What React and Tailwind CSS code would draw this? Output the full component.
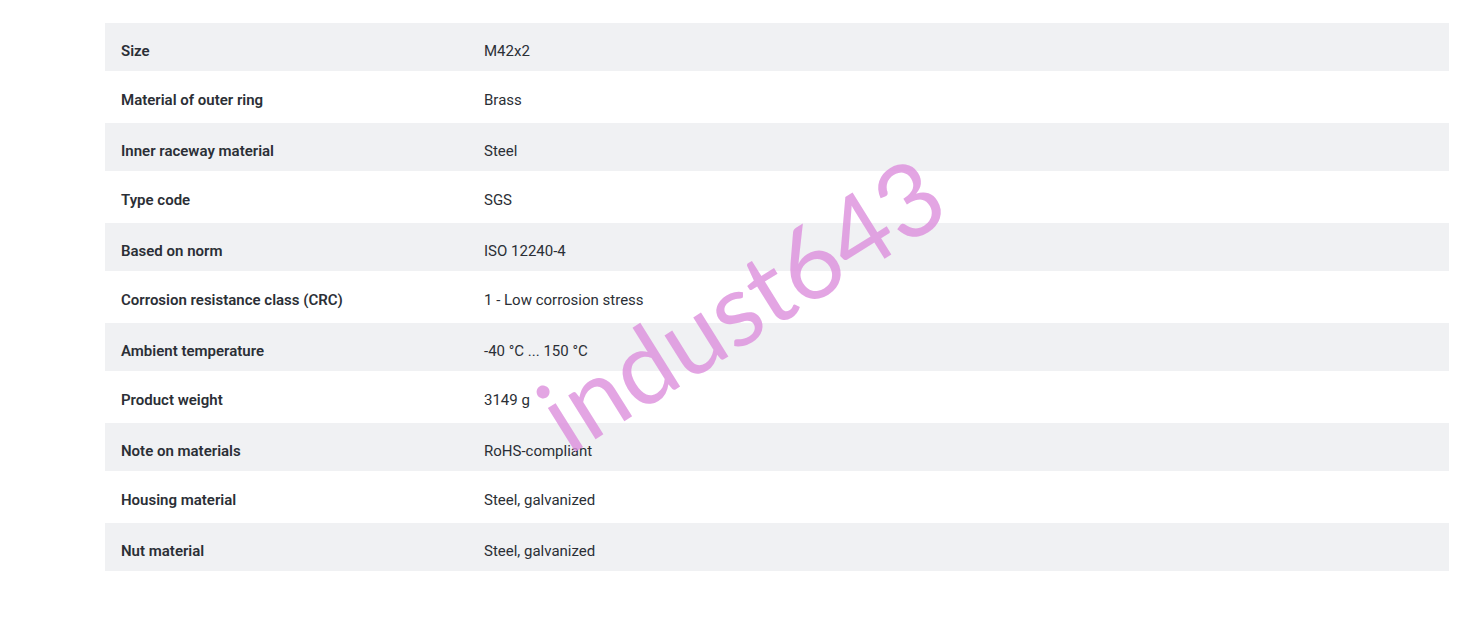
import React from 'react'

const specs = [
  ['Size', 'M42x2'],
  ['Material of outer ring', 'Brass'],
  ['Inner raceway material', 'Steel'],
  ['Type code', 'SGS'],
  ['Based on norm', 'ISO 12240-4'],
  ['Corrosion resistance class (CRC)', '1 - Low corrosion stress'],
  ['Ambient temperature', '-40 °C ... 150 °C'],
  ['Product weight', '3149 g'],
  ['Note on materials', 'RoHS-compliant'],
  ['Housing material', 'Steel, galvanized'],
  ['Nut material', 'Steel, galvanized']
]

const App = () => {
  return (
    <div className="relative min-h-[623px] overflow-hidden bg-white text-[#2b2f36] font-['Roboto',sans-serif]">
      <div className="ml-[105px] w-[1344px] pt-[22px]">
        {specs.map(([label, value], index) => (
          <div
            key={label}
            className={`flex h-[50px] text-[15px] leading-5 ${
              index % 2 === 0 ? 'border-y border-white bg-[#f0f1f3]' : ''
            }`}
          >
            <div className="w-[363px] shrink-0 px-4 pt-[18px] font-semibold">{label}</div>
            <div className="px-4 pt-[18px]">{value}</div>
          </div>
        ))}
      </div>

      <div className="pointer-events-none absolute left-[548px] top-[372px] origin-left -rotate-[32deg] font-['Lato',sans-serif] text-[102px] font-normal leading-none text-[#dc8fdc]/80">
        indust643
      </div>
    </div>
  )
}

export default App
